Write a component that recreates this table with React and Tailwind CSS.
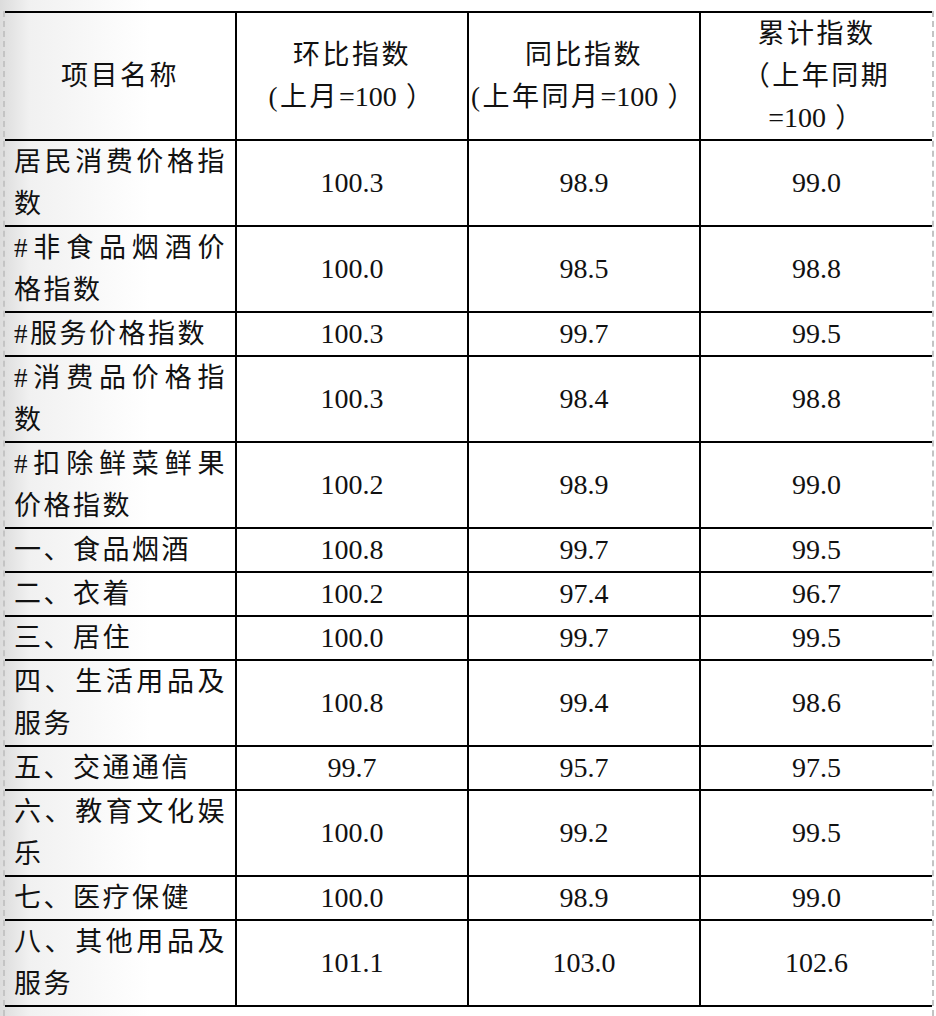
import React from "react";

const rows = [
  ["居民消费价格指数", "100.3", "98.9", "99.0"],
  ["#非食品烟酒价格指数", "100.0", "98.5", "98.8"],
  ["#服务价格指数", "100.3", "99.7", "99.5"],
  ["#消费品价格指数", "100.3", "98.4", "98.8"],
  ["#扣除鲜菜鲜果价格指数", "100.2", "98.9", "99.0"],
  ["一、食品烟酒", "100.8", "99.7", "99.5"],
  ["二、衣着", "100.2", "97.4", "96.7"],
  ["三、居住", "100.0", "99.7", "99.5"],
  ["四、生活用品及服务", "100.8", "99.4", "98.6"],
  ["五、交通通信", "99.7", "95.7", "97.5"],
  ["六、教育文化娱乐", "100.0", "99.2", "99.5"],
  ["七、医疗保健", "100.0", "98.9", "99.0"],
  ["八、其他用品及服务", "101.1", "103.0", "102.6"],
];

const font = "font-['Liberation_Serif','Noto_Sans_CJK_SC',serif]";

// "=100" in the header is set tight, without the CJK letter spacing
const Num = ({ children }) => (
  <span className="tracking-normal text-[28px]">{children}</span>
);

export default function App() {
  return (
    <div className="min-h-screen w-[936px] pt-[11px] pl-[3px] bg-[linear-gradient(to_right,#dcdcdc_0px,#f1f1f1_30px,#ffffff_150px)]">
      <div className="w-[931px] border-x-2 border-dashed border-[#c4c4c4] min-h-[1005px]">
        <table className={`w-[927px] border-collapse table-fixed text-[#111] ${font}`}>
          <colgroup>
            <col className="w-[231px]" />
            <col className="w-[232px]" />
            <col className="w-[232px]" />
            <col className="w-[232px]" />
          </colgroup>
          <thead>
            <tr className="text-[27px] leading-[42px] tracking-[2.5px] text-center">
              <th className="border-2 border-l-0 border-black font-normal p-0 align-middle">
                项目名称
              </th>
              <th className="border-2 border-black font-normal p-0 align-middle">
                环比指数
                <br />
                (上月<Num>=100</Num> ）
              </th>
              <th className="border-2 border-black font-normal p-0 align-middle">
                同比指数
                <br />
                (上年同月<Num>=100</Num> ）
              </th>
              <th className="border-2 border-r-0 border-black font-normal p-0 align-middle">
                累计指数
                <br />
                （上年同期
                <br />
                <Num>=100</Num> ）
              </th>
            </tr>
          </thead>
          <tbody>
            {rows.map((r) => (
              <tr key={r[0]}>
                <td className="border-2 border-l-0 border-black pl-[9px] pr-[8px] py-0 text-[27px] leading-[42px] tracking-[2.5px] text-justify align-top">
                  {r[0]}
                </td>
                {r.slice(1).map((v, i) => (
                  <td
                    key={i}
                    className={`border-2 border-black p-0 text-center align-middle text-[28px] leading-[42px] ${
                      i === 2 ? "border-r-0" : ""
                    }`}
                  >
                    {v}
                  </td>
                ))}
              </tr>
            ))}
          </tbody>
        </table>
      </div>
    </div>
  );
}
